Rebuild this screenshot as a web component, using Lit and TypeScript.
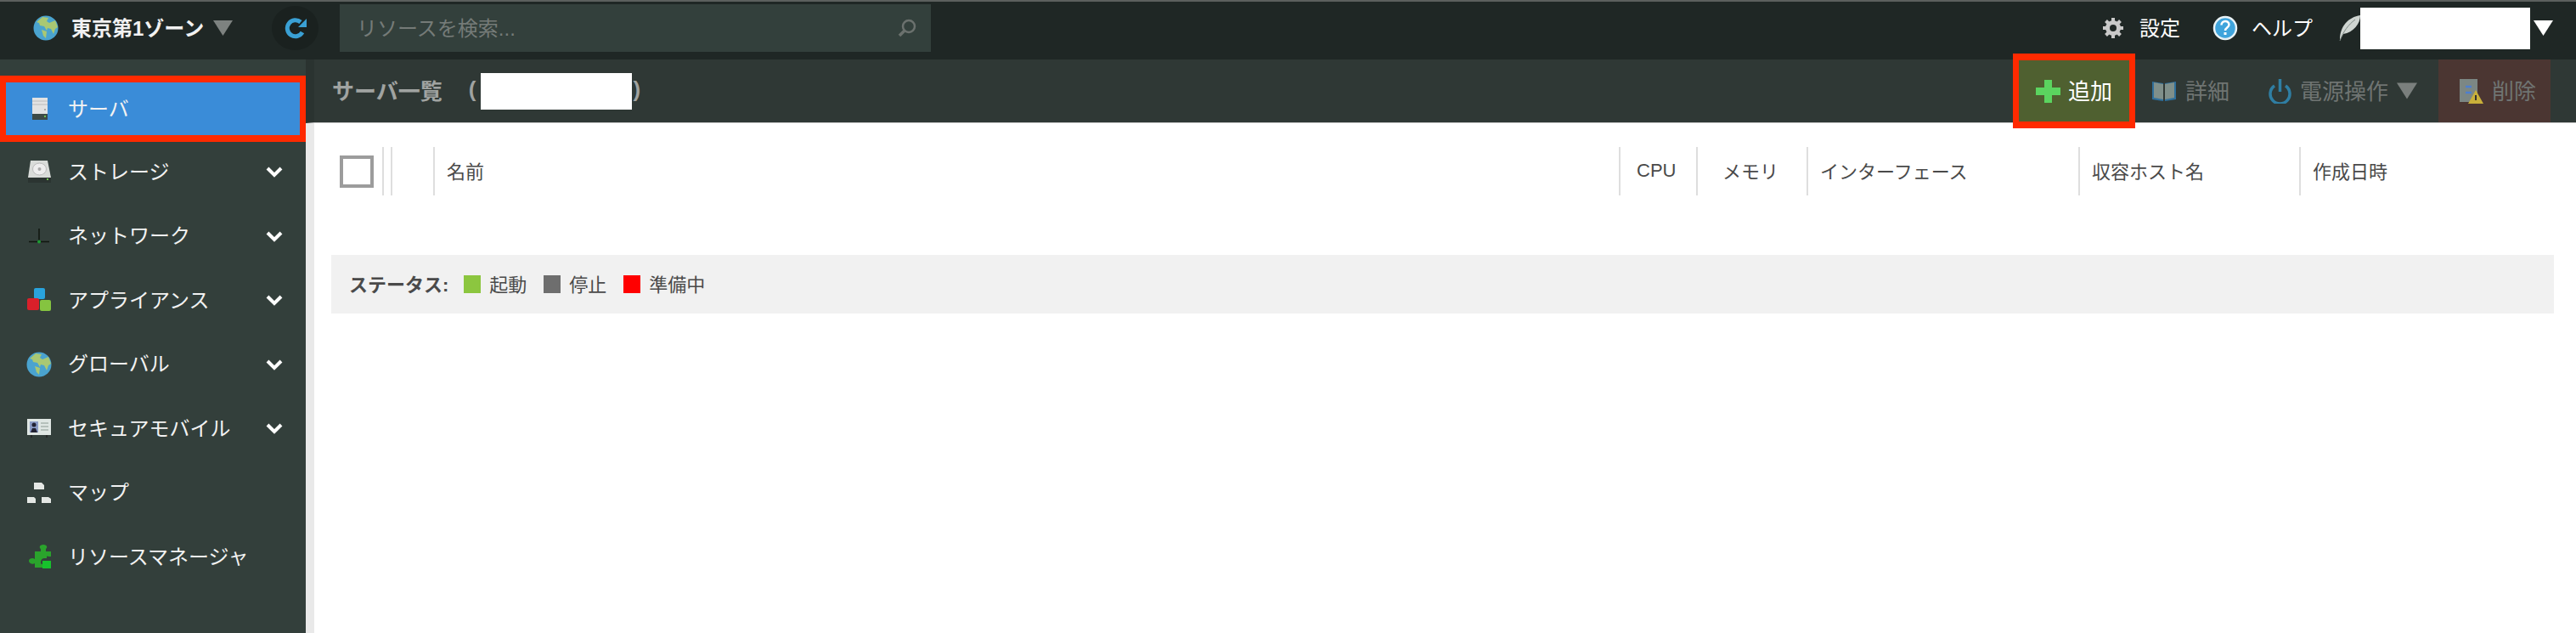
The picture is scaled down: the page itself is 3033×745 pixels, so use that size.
import { LitElement, html, css } from "lit";
import { customElement } from "lit/decorators.js";

const chevron = html`<svg class="chev" viewBox="0 0 20 14"><path d="M2 3l8 8 8-8" fill="none" stroke="#fff" stroke-width="4"/></svg>`;

const globe = html`<svg class="ic" viewBox="0 0 30 30"><circle cx="15" cy="15" r="14.500" fill="#4aa3cf"/><path d="M4 8l7-6 7 1-2 4 3 2 7-3 3 8-3 2-2 6-3-6-4-1-1 3-3-5-5-1-1-3z" fill="#a9c873"/><path d="M10 17l6 2-1 8-3-3z" fill="#a9c873"/></svg>`;

const icons: Record<string, unknown> = {
  server: html`<svg class="ic" viewBox="0 0 30 30"><rect x="7" y="2" width="18" height="26" fill="#e2e2e2"/><path d="M7 6h18M7 10h18" stroke="#bbb"/><rect x="7" y="21" width="18" height="7" fill="#3d4a46"/><rect x="21" y="23" width="2" height="2" fill="#6fc04f"/><rect x="21" y="15" width="2" height="2" fill="#aaa"/></svg>`,
  storage: html`<svg class="ic" viewBox="0 0 30 30"><path d="M5 2h20l4 20H2z" fill="#d9dcd9"/><ellipse cx="15.500" cy="12" rx="8" ry="7" fill="#eee" stroke="#bbb"/><circle cx="15.500" cy="12" r="2" fill="#aaa"/><rect x="2" y="22" width="27" height="6" fill="#2b3431"/><rect x="24" y="23" width="2" height="2" fill="#6fc04f"/></svg>`,
  network: html`<svg class="ic" viewBox="0 0 30 30"><path d="M15 6v17M3 21.500h24" stroke="#10160f" stroke-width="1.500"/><circle cx="15" cy="21.500" r="2" fill="#1e9c34"/></svg>`,
  appliance: html`<svg class="ic" viewBox="0 0 30 30"><rect x="9" y="1" width="13" height="13" rx="2" fill="#29a3dc"/><rect x="1" y="13" width="14" height="14" rx="2" fill="#d9202a"/><rect x="16" y="15" width="13" height="13" rx="2" fill="#85c440"/></svg>`,
  global: globe,
  mobile: html`<svg class="ic" viewBox="0 0 30 30"><rect x="1" y="4" width="28" height="19" fill="#dfe6e3"/><rect x="4" y="7" width="10" height="13" fill="#8a9bc4"/><circle cx="9" cy="11" r="2.500" fill="#223"/><path d="M5 20l2-5h4l2 5z" fill="#223"/><path d="M17 9h9M17 13h9M17 17h9" stroke="#a8b4ae" stroke-width="1.500"/><path d="M6 23v3M24 23v3" stroke="#222" stroke-width="1.500"/></svg>`,
  map: html`<svg class="ic" viewBox="0 0 30 30"><path d="M9 3h9l3 3v5H9zM1 20h8l2 2v5H1zM18 20h8l3 2v5H18z" fill="#e4e7e4"/></svg>`,
  puzzle: html`<svg class="ic" viewBox="0 0 30 30"><path d="M10 9h7V6c-2-1-2-5 3-5s5 4 3 5v3h6v6h-3c-2-1-2 0-2 2h-3c-3 0-4 3-4 5s1 2 3 2v4h-10v-5c-2 2-7 0-7-3s5-4 7-2z" fill="#2aa32c"/><rect x="19" y="20" width="10" height="9" fill="#17c22c"/></svg>`,
};

const nav = [
  { k: "server", t: "サーバ", active: true },
  { k: "storage", t: "ストレージ", more: true },
  { k: "network", t: "ネットワーク", more: true },
  { k: "appliance", t: "アプライアンス", more: true },
  { k: "global", t: "グローバル", more: true },
  { k: "mobile", t: "セキュアモバイル", more: true },
  { k: "map", t: "マップ" },
  { k: "puzzle", t: "リソースマネージャ" },
];

const cols = [
  { t: "", w: 10, c: "empty" },
  { t: "", w: 50, c: "empty" },
  { t: "名前", w: 1396, c: "" },
  { t: "CPU", w: 91, c: "cpu" },
  { t: "メモリ", w: 130, c: "center" },
  { t: "インターフェース", w: 320, c: "" },
  { t: "収容ホスト名", w: 260, c: "" },
  { t: "作成日時", w: 300, c: "" },
];

@customElement("app-root")
export class AppRoot extends LitElement {
  static styles = css`
    :host { display: block; width: 3033px; height: 745px; overflow: hidden; background: #fff; font-family: "Liberation Sans", "Noto Sans CJK JP", sans-serif; }
    .top { height: 70px; box-sizing: border-box; border-top: 2px solid #5c605e; background: #1f2725; display: flex; align-items: center; color: #fff; padding-bottom: 6px; }
    .top span { padding-bottom: 4px; }
    .zone { display: flex; align-items: center; margin-left: 39px; font-size: 24px; font-weight: 700; color: #f1f1f1; width: 237px; flex: none; }
    .zone .ic { margin-right: 15px; }
    .zone .tri { margin-left: 11px; }
    .ic { width: 30px; height: 30px; flex: none; }
    .tri { width: 23px; height: 18px; flex: none; }
    .refresh { width: 55px; height: 52px; border-radius: 50%; background: #1a211f; display: flex; align-items: center; justify-content: center; margin-left: 44px; flex: none; }
    .refresh svg { width: 28px; height: 28px; }
    .search { width: 696px; height: 56px; margin-left: 25px; background: #33403c; display: flex; align-items: center; box-sizing: border-box; padding: 0 16px 0 20px; justify-content: space-between; color: #757b78; font-size: 24px; flex: none; }
    .search svg { width: 24px; height: 24px; }
    .right { margin-left: auto; display: flex; align-items: center; font-size: 24px; color: #fff; padding-right: 27px; }
    .gear { width: 26px; height: 26px; margin-right: 18px; }
    .help { width: 30px; height: 30px; margin: 0 16px 0 38px; }
    .feather { width: 26px; height: 32px; margin-left: 30px; }
    .mask { background: #fff; flex: none; }
    .user { width: 200px; height: 49px; margin: 0 4px 0 0; }
    .body { display: flex; height: 675px; }
    .side { width: 360px; flex: none; background: #333f3b; padding-top: 19px; box-sizing: border-box; color: #f2f2f2; font-size: 24px; }
    .item { height: 75.5px; display: flex; align-items: center; padding: 0 27px 0 31px; position: relative; box-sizing: border-box; }
    .item .ic { margin-right: 19px; }
    .item .lbl { flex: 1; padding-bottom: 4px; }
    .item.active { background: #3a8cd8; height: 78px; margin-bottom: -2.500px; }
    .item.active::after { content: ""; position: absolute; inset: 0; border: solid #ff2a00; border-width: 8px 7px; box-sizing: border-box; }
    .chev { width: 20px; height: 14px; }
    .main { flex: 1; display: flex; flex-direction: column; background: #fff; min-width: 0; }
    .bar { height: 75px; background: #2f3835; display: flex; align-items: center; border-bottom: 1px solid #ccc; border-left: 10px solid #2a3330; box-sizing: border-box; }
    .title { margin-left: 21px; font-size: 26px; font-weight: 700; color: #a0a3a1; display: flex; align-items: center; }
    .title span { padding-bottom: 4px; }
    .title .open { margin-left: 31px; }
    .tmask { width: 178px; height: 43px; margin: 0 1px 0 6px; }
    .actions { margin-left: auto; display: flex; align-items: stretch; height: 100%; margin-right: 30px; font-size: 26px; color: #6f7472; }
    .act { display: flex; align-items: center; position: relative; }
    .act span { padding-bottom: 4px; }
    .add { width: 130px; background: #4f6030; color: #fff; padding-left: 20px; box-sizing: border-box; margin: 1px 0; }
    .add::after { content: ""; position: absolute; inset: -8px -7px; border: solid #ff2a00; border-width: 8px 7px; }
    .add svg { width: 29px; height: 27px; margin-right: 9px; }
    .detail { width: 138px; padding-left: 26px; box-sizing: border-box; }
    .detail svg { width: 30px; height: 26px; margin-right: 10px; }
    .power { width: 226px; padding-left: 26px; box-sizing: border-box; }
    .power svg.p { width: 27px; height: 30px; margin-right: 10px; }
    .power .tri { margin-left: 10px; width: 24px; height: 20px; }
    .del { width: 132px; background: #4b3632; padding-left: 24px; box-sizing: border-box; }
    .del svg { width: 30px; height: 30px; margin-right: 9px; }
    .content { flex: 1; border-left: 10px solid #e9e9e9; padding: 28px 26px 0 20px; color: #4a4a4a; font-size: 22px; }
    .thead { display: flex; height: 57px; align-items: stretch; }
    .check { width: 60px; flex: none; display: flex; align-items: center; padding-left: 10px; box-sizing: border-box; }
    .check i { display: block; width: 40px; height: 38px; border: 4px solid #9c9c9c; box-sizing: border-box; }
    .th { border-left: 2px solid #dedede; box-sizing: border-box; display: flex; align-items: center; padding: 0 0 4px 14px; flex: none; }
    .th.empty { padding: 0; }
    .th.cpu { padding-left: 19px; padding-bottom: 2px; }
    .th.center { justify-content: center; padding-left: 0; padding-right: 4px; }
    .status { margin-top: 70px; height: 69px; background: #f1f1f1; display: flex; align-items: center; padding-left: 21px; }
    .status b { margin-right: 18px; padding-bottom: 4px; }
    .sw { width: 20px; height: 21px; margin-right: 10px; flex: none; }
    .lg { margin-right: 20px; padding-bottom: 4px; }
    .g { background: #8cc63f; } .k { background: #6e6e6e; } .r { background: #ff0000; }
  `;

  private tri(color: string) {
    return html`<svg class="tri" viewBox="0 0 23 18"><path d="M0 0h23L11.500 18z" fill=${color}/></svg>`;
  }

  render() {
    return html`
      <div class="top">
        <div class="zone">${globe}<span>東京第1ゾーン</span>${this.tri("#7d8280")}</div>
        <div class="refresh"><svg viewBox="0 0 28 28"><path d="M22 19a9.500 9.500 0 1 1-2-12" fill="none" stroke="#3aa0d4" stroke-width="5"/><path d="M27 3v10H17z" fill="#3aa0d4"/></svg></div>
        <div class="search"><span>リソースを検索...</span><svg viewBox="0 0 24 24"><circle cx="14" cy="10" r="7" fill="none" stroke="#6b716e" stroke-width="2.500"/><path d="M9 15l-6 6" stroke="#6b716e" stroke-width="3.500"/></svg></div>
        <div class="right">
          <svg class="gear" viewBox="0 0 26 26"><circle cx="13" cy="13" r="6.500" fill="none" stroke="#c9c9c9" stroke-width="5"/><path d="M13 1v24M1 13h24M4.500 4.500l17 17M21.500 4.500l-17 17" stroke="#c9c9c9" stroke-width="4"/><circle cx="13" cy="13" r="4" fill="#1f2725"/></svg>
          <span>設定</span>
          <svg class="help" viewBox="0 0 30 30"><circle cx="15" cy="15" r="13" fill="#3fa4dc" stroke="#e8f2f6" stroke-width="2.500"/><path d="M10.500 11.500c0-6 9-6 9-.5 0 3.500-4.500 3.500-4.500 7" fill="none" stroke="#fff" stroke-width="2.500"/><rect x="13.500" y="20" width="3" height="3" fill="#fff"/></svg>
          <span>ヘルプ</span>
          <svg class="feather" viewBox="0 0 26 32"><path d="M2 30C2 14 12 3 26 1c0 10-8 20-20 22z" fill="#cfd5d1"/><path d="M2 31C6 20 12 12 20 6" stroke="#7f8a85" fill="none"/></svg>
          <div class="mask user"></div>
          ${this.tri("#fff")}
        </div>
      </div>
      <div class="body">
        <nav class="side">
          ${nav.map((n) => html`<div class="item ${n.active ? "active" : ""}">${icons[n.k]}<span class="lbl">${n.t}</span>${n.more ? chevron : ""}</div>`)}
        </nav>
        <div class="main">
          <div class="bar">
            <div class="title"><span>サーバ一覧</span><span class="open">(</span><div class="mask tmask"></div><span>)</span></div>
            <div class="actions">
              <div class="act add"><svg viewBox="0 0 29 27"><path d="M10 0h9v9h10v9H19v9h-9v-9H0V9h10z" fill="#5bd45f"/></svg><span>追加</span></div>
              <div class="act detail"><svg viewBox="0 0 30 26"><path d="M1 2l13 2v21L1 23z" fill="#2f6f9c"/><path d="M16 4l13-2v21l-13 2z" fill="#2f6f9c"/><path d="M3 3l11 2v18L3 21zM16 5l11-2v18l-11 2z" fill="#7f8f8a"/></svg><span>詳細</span></div>
              <div class="act power"><svg class="p" viewBox="0 0 27 30"><path d="M7 9a11.500 11.500 0 1 0 13 0" fill="none" stroke="#2f7ea3" stroke-width="3.500"/><path d="M13.500 1v15" stroke="#2f7ea3" stroke-width="3.500"/></svg><span>電源操作</span>${this.tri("#7a7f7d")}</div>
              <div class="act del"><svg viewBox="0 0 30 30"><rect x="1" y="1" width="21" height="27" fill="#7c8784"/><path d="M8 10h7M15 17H8" stroke="#4d7fd0" stroke-width="2.500"/><path d="M20 14l9 16H11z" fill="#c9b03a"/><rect x="19" y="20" width="2" height="6" fill="#333"/></svg><span>削除</span></div>
            </div>
          </div>
          <div class="content">
            <div class="thead">
              <div class="check"><i></i></div>
              ${cols.map((c) => html`<div class="th ${c.c}" style="width:${c.w}px">${c.t}</div>`)}
            </div>
            <div class="status">
              <b>ステータス:</b>
              <span class="sw g"></span><span class="lg">起動</span>
              <span class="sw k"></span><span class="lg">停止</span>
              <span class="sw r"></span><span class="lg">準備中</span>
            </div>
          </div>
        </div>
      </div>
    `;
  }
}
